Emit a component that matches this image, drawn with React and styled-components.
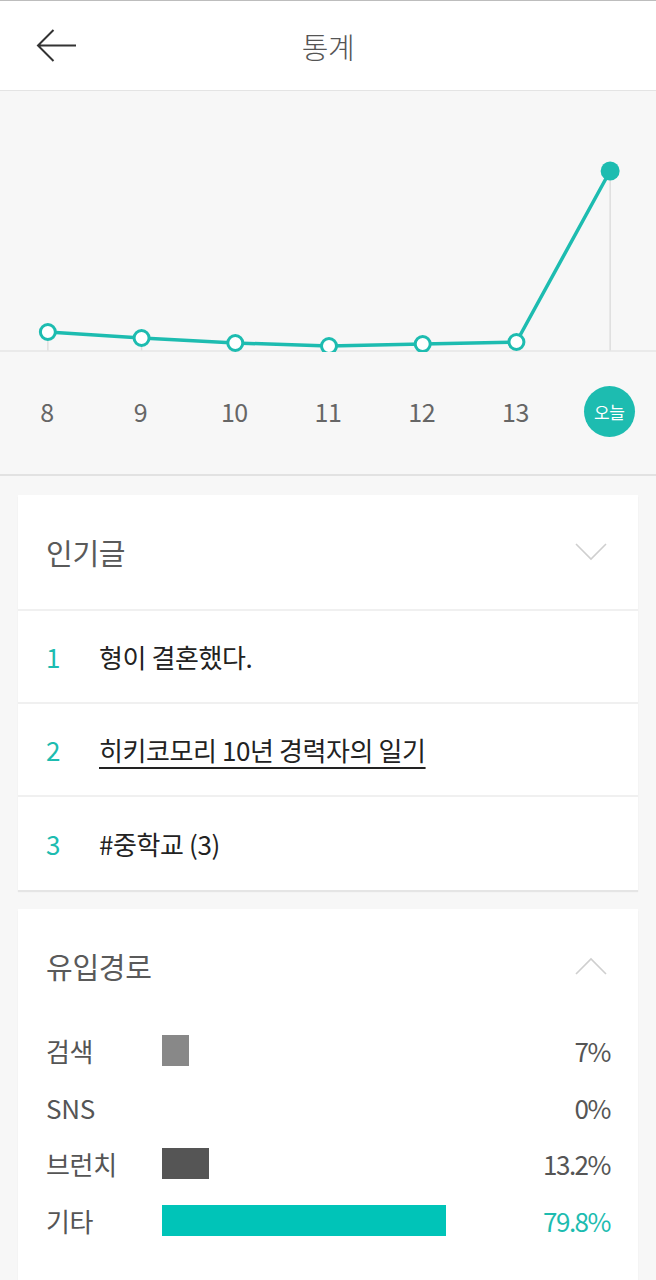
import React from "react";
import styled, { createGlobalStyle } from "styled-components";

const TEAL = "#1dbcb0";
const FONT = `"Noto Sans CJK KR", "Noto Sans", sans-serif`;

const GlobalStyle = createGlobalStyle`
  html, body { margin: 0; padding: 0; background: #f7f7f7; }
  body { font-family: ${FONT}; -webkit-font-smoothing: antialiased; }
  * { box-sizing: border-box; }
`;

const Page = styled.div`
  width: 656px;
  min-height: 1280px;
  background: #f7f7f7;
  overflow: hidden;
`;

const Header = styled.header`
  height: 91px;
  background: #fff;
  border-top: 1px solid #bdbdbd;
  border-bottom: 1px solid #e4e4e4;
  display: grid;
  grid-template-columns: 120px 1fr 120px;
  align-items: center;
`;

const BackButton = styled.button`
  border: 0;
  background: none;
  padding: 0 0 0 36px;
  height: 40px;
  display: flex;
  align-items: center;
  cursor: pointer;
`;

const Title = styled.h1`
  margin: 0;
  text-align: center;
  font-size: 29px;
  font-weight: 300;
  color: #555;
  letter-spacing: -0.5px;
`;

const ChartSection = styled.section`
  background: #f7f7f7;
  border-bottom: 2px solid #e2e2e2;
`;

const ChartSvg = styled.svg`
  display: block;
  width: 656px;
  height: 261px;
`;

const Axis = styled.div`
  display: grid;
  grid-template-columns: repeat(7, 1fr);
  align-items: center;
  height: 122px;
  padding-bottom: 4px;
`;

const AxisLabel = styled.div`
  display: flex;
  justify-content: center;
  font-size: 25px;
  color: #666;
  font-weight: 400;
  letter-spacing: -0.5px;
`;

const TodayBadge = styled.div`
  width: 51px;
  height: 51px;
  border-radius: 50%;
  background: ${TEAL};
  color: #fff;
  font-size: 17px;
  display: flex;
  align-items: center;
  justify-content: center;
  letter-spacing: -0.5px;
`;

const Card = styled.section`
  background: #fff;
  margin: ${(p) => p.$top}px 18px 0;
  box-shadow: 0 2px 1px rgba(0, 0, 0, 0.07);
`;

const CardHeader = styled.div`
  height: ${(p) => p.$height}px;
  display: flex;
  align-items: center;
  justify-content: space-between;
  padding: 0 30px 0 28px;
  border-bottom: ${(p) => (p.$divider ? "2px solid #f0f0f0" : "0")};
`;

const CardTitle = styled.h2`
  margin: 0;
  font-size: 29px;
  font-weight: 400;
  color: #5a5a5a;
  letter-spacing: -0.3px;
`;

const PostRow = styled.div`
  height: 93px;
  display: flex;
  align-items: center;
  padding-left: 28px;
  border-bottom: ${(p) => (p.$last ? "0" : "2px solid #f0f0f0")};
`;

const Rank = styled.span`
  width: 53px;
  font-size: 26px;
  color: ${TEAL};
`;

const PostTitle = styled.span`
  font-size: 26px;
  color: #222;
  letter-spacing: -0.4px;
  text-decoration: ${(p) => (p.$underline ? "underline" : "none")};
  text-underline-offset: 6px;
  text-decoration-thickness: 2px;
`;

const SourceList = styled.div`
  padding: 0 28px 40px;
  display: flex;
  flex-direction: column;
`;

const SourceRow = styled.div`
  height: 56.7px;
  display: grid;
  grid-template-columns: 116px 1fr auto;
  align-items: center;
`;

const SourceLabel = styled.span`
  font-size: 26px;
  color: #555;
  letter-spacing: -0.3px;
`;

const BarTrack = styled.div`
  height: 31px;
  display: flex;
`;

const Bar = styled.div`
  height: 100%;
  background: ${(p) => p.$color};
`;

const Percent = styled.span`
  font-size: 26px;
  color: ${(p) => (p.$accent ? TEAL : "#555")};
  text-align: right;
  letter-spacing: -1.5px;
`;

function ArrowLeft() {
  return (
    <svg width="42" height="34" viewBox="36 30 42 34" fill="none">
      <path d="M76 46.5H38.5M53.5 31L38 46.5L53.5 62" stroke="#333" strokeWidth="2" />
    </svg>
  );
}

function Chevron({ up }) {
  return (
    <svg width="34" height="20" viewBox="0 0 34 20" fill="none">
      <path
        d={up ? "M2 18L17 3L32 18" : "M2 2L17 17L32 2"}
        stroke="#cfcfcf"
        strokeWidth="1.6"
      />
    </svg>
  );
}

const days = [
  { label: "8", h: 19 },
  { label: "9", h: 13 },
  { label: "10", h: 8 },
  { label: "11", h: 5 },
  { label: "12", h: 7 },
  { label: "13", h: 9 },
  { label: "오늘", h: 180, today: true },
];

function Chart() {
  const base = 260;
  const step = 656 / 7;
  const pts = days.map((d, i) => ({ x: step * (i + 0.5) + 1, y: base - d.h, today: d.today }));
  const line = pts.map((p, i) => `${i ? "L" : "M"}${p.x.toFixed(1)} ${p.y}`).join(" ");
  return (
    <ChartSvg viewBox="0 0 656 261">
      {pts.map((p, i) => (
        <line key={"v" + i} x1={p.x} x2={p.x} y1={p.y} y2={base} stroke="#dedede" strokeWidth="1.5" />
      ))}
      <line x1="0" x2="656" y1={base} y2={base} stroke="#e6e6e6" strokeWidth="1.5" />
      <path d={line} fill="none" stroke={TEAL} strokeWidth="3.5" strokeLinejoin="round" />
      {pts.map((p, i) =>
        p.today ? (
          <circle key={i} cx={p.x} cy={p.y} r="9.5" fill={TEAL} />
        ) : (
          <circle key={i} cx={p.x} cy={p.y} r="7.5" fill="#fff" stroke={TEAL} strokeWidth="3" />
        )
      )}
    </ChartSvg>
  );
}

const posts = [
  { rank: 1, title: "형이 결혼했다." },
  { rank: 2, title: "히키코모리 10년 경력자의 일기", underline: true },
  { rank: 3, title: "#중학교 (3)" },
];

const sources = [
  { label: "검색", pct: 7, color: "#888888", w: 27 },
  { label: "SNS", pct: 0, color: "#888888", w: 0 },
  { label: "브런치", pct: 13.2, color: "#555555", w: 47 },
  { label: "기타", pct: 79.8, color: "#00c4b8", w: 284, accent: true },
];

export default function App() {
  return (
    <Page>
      <GlobalStyle />
      <Header>
        <BackButton aria-label="뒤로">
          <ArrowLeft />
        </BackButton>
        <Title>통계</Title>
        <span />
      </Header>

      <ChartSection>
        <Chart />
        <Axis>
          {days.map((d) => (
            <AxisLabel key={d.label}>
              {d.today ? <TodayBadge>{d.label}</TodayBadge> : d.label}
            </AxisLabel>
          ))}
        </Axis>
      </ChartSection>

      <Card $top={19}>
        <CardHeader $height={116} $divider>
          <CardTitle>인기글</CardTitle>
          <Chevron />
        </CardHeader>
        {posts.map((p, i) => (
          <PostRow key={p.rank} $last={i === posts.length - 1}>
            <Rank>{p.rank}</Rank>
            <PostTitle $underline={p.underline}>{p.title}</PostTitle>
          </PostRow>
        ))}
      </Card>

      <Card $top={19}>
        <CardHeader $height={113}>
          <CardTitle>유입경로</CardTitle>
          <Chevron up />
        </CardHeader>
        <SourceList>
          {sources.map((s) => (
            <SourceRow key={s.label}>
              <SourceLabel>{s.label}</SourceLabel>
              <BarTrack>
                {s.w > 0 && <Bar $color={s.color} style={{ width: s.w }} />}
              </BarTrack>
              <Percent $accent={s.accent}>{s.pct}%</Percent>
            </SourceRow>
          ))}
        </SourceList>
      </Card>
    </Page>
  );
}
